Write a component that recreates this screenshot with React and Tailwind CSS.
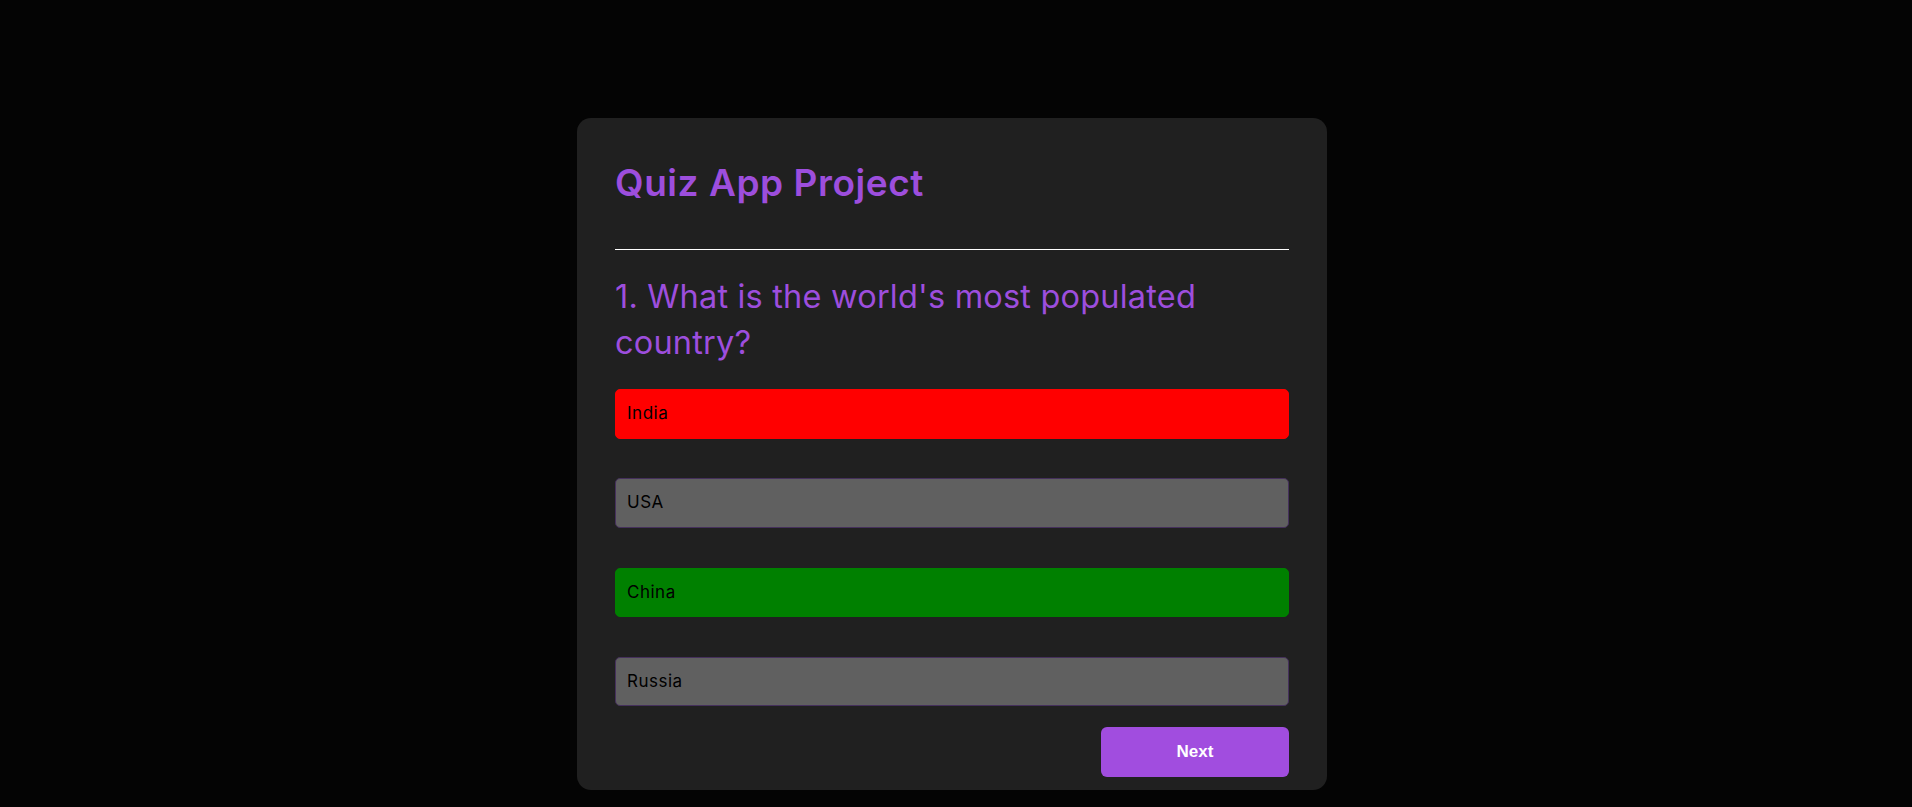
import React from 'react';

const options = [
  { label: 'India', style: 'bg-[#ff0000] border-[#ff0000]' },
  { label: 'USA', style: 'bg-[#606060] border-[#45305c]' },
  { label: 'China', style: 'bg-[#008000] border-[#008000]' },
  { label: 'Russia', style: 'bg-[#606060] border-[#45305c]' },
];

const Option = ({ label, style }) => (
  <li
    className={`h-[49.5px] flex items-center pl-[11px] border rounded-[5px] text-[17px] tracking-[0.03em] text-black ${style}`}
  >
    {label}
  </li>
);

export default function App() {
  return (
    <div className="min-h-screen w-full bg-[#040404] flex justify-center pr-[8px] pt-[118px] font-['Inter',sans-serif]">
      <div className="w-[750px] h-[672px] bg-[#202020] rounded-[14px] px-[38px] pt-[43px] pb-[13px] flex flex-col">
        <h1 className="text-[37px] leading-[44px] font-semibold text-[#9d4edd] tracking-[0.015em]">
          Quiz App Project
        </h1>
        <hr className="mt-[44px] border-0 h-px bg-white" />

        <h2 className="mt-[24px] text-[32.5px] leading-[46px] font-normal text-[#9d4edd] tracking-[0.006em]">
          1. What is the world's most populated country?
        </h2>

        <ul className="mt-[23px] flex flex-col gap-[39.8px]">
          {options.map((o) => (
            <Option key={o.label} {...o} />
          ))}
        </ul>

        <div className="mt-[20.5px] flex justify-end">
          <button className="w-[188px] h-[50px] rounded-[6px] bg-[#a14ddf] text-white text-[17px] font-bold font-['Liberation_Sans',Arial,sans-serif]">
            Next
          </button>
        </div>
      </div>
    </div>
  );
}
